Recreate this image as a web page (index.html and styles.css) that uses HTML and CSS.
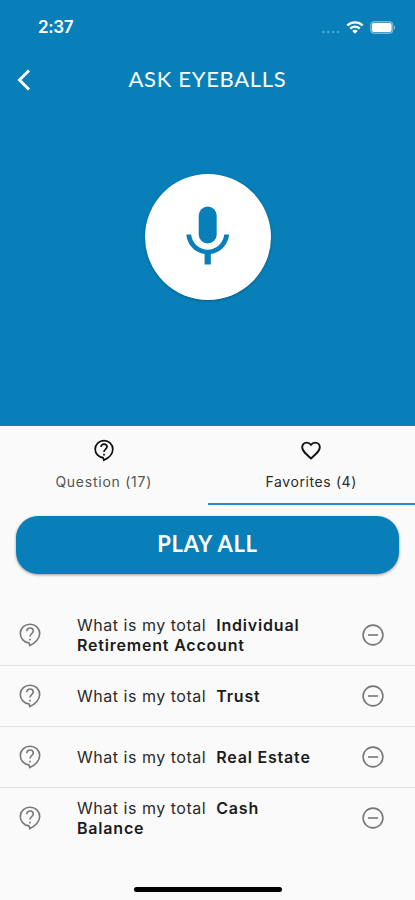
FILE: index.html
```html
<!DOCTYPE html>
<html lang="en">
<head>
    <meta charset="utf-8">
    <title>Ask Eyeballs</title>
    <link rel="stylesheet" href="styles.css">
</head>
<body>
    <svg class="symbols" width="0" height="0">
        <symbol id="question" viewBox="0 0 22 24">
            <path d="M11 1.200C5.600 1.200 1.300 5.300 1.300 10.500c0 4.900 3.800 8.900 8.700 9.400l.8 2.700c5.500-2.300 9.900-7 9.900-12.100 0-5.200-4.300-9.300-9.700-9.300z"/>
            <path d="M7.800 8.200c0-1.900 1.400-3.200 3.200-3.200s3.300 1.300 3.300 3c0 2.400-3.300 2.700-3.300 5.600M11 15.700v1.700"/>
        </symbol>
        <symbol id="minus" viewBox="0 0 22 22">
            <circle cx="11" cy="11" r="9.9"/>
            <path d="M6 11h10"/>
        </symbol>
    </svg>

    <header class="hero">
        <div class="status">
            <span class="time">2:37</span>
            <svg class="signal" width="18" height="4" viewBox="0 0 18 4">
                <circle cx="1.5" cy="2" r="1.3"/><circle cx="6.3" cy="2" r="1.3"/><circle cx="11.1" cy="2" r="1.3"/><circle cx="15.9" cy="2" r="1.3"/>
            </svg>
            <svg class="wifi" width="18" height="13" viewBox="0 0 18 13">
                <path d="M1.3 4.4c4.4-4.1 11-4.1 15.4 0M4.2 7.6c2.8-2.5 6.8-2.5 9.6 0"/>
                <path class="dot" d="M6.3 9.9c1.5-1.5 3.9-1.5 5.4 0L9 12.7z"/>
            </svg>
            <svg class="battery" width="26" height="13" viewBox="0 0 26 13">
                <rect class="shell" x=".5" y=".5" width="22.5" height="12" rx="3.5"/>
                <rect x="2" y="2" width="19.5" height="9" rx="2"/>
                <path class="cap" d="M24 4.5c1.7.6 1.7 3.4 0 4z"/>
            </svg>
        </div>
        <div class="navbar">
            <svg class="back" width="14" height="22" viewBox="0 0 14 22"><path d="M12 1.500 2.500 11l9.500 9.500"/></svg>
            <h1>ASK EYEBALLS</h1>
        </div>
        <div class="mic">
            <svg width="44" height="60" viewBox="0 0 44 60">
                <rect x="12.700" y=".5" width="18" height="37" rx="9"/>
                <path d="M.3 28.500h4.800c1.200 9 8.200 15.200 16.600 15.200s15.400-6.200 16.600-15.200h4.800c-.9 10-8.400 18.200-18.300 19.600v10.400h-6.200V48.100C8.700 46.700 1.200 38.500.3 28.500z"/>
            </svg>
        </div>
    </header>

    <nav class="tabs">
        <div class="tab">
            <svg class="icon question" width="20" height="23"><use href="#question"/></svg>
            <span class="wide">Question (17)</span>
        </div>
        <div class="tab active">
            <svg class="icon heart" width="20" height="23" viewBox="0 0 20 23"><path d="M10 19.500 8.600 18.200C4 14 1.200 11.500 1.200 8.200c0-2.600 2-4.600 4.500-4.600 1.700 0 3.300.8 4.300 2.200 1-1.400 2.600-2.200 4.300-2.200 2.500 0 4.500 2 4.500 4.600 0 3.300-2.800 5.800-7.400 10z"/></svg>
            <span>Favorites (4)</span>
        </div>
    </nav>

    <button class="play">PLAY ALL</button>

    <ul class="list">
        <li>
            <svg class="icon" width="22" height="24"><use href="#question"/></svg>
            <p>What is my total&nbsp; <b>Individual<br>Retirement Account</b></p>
            <svg class="icon" width="22" height="22"><use href="#minus"/></svg>
        </li>
        <li>
            <svg class="icon" width="22" height="24"><use href="#question"/></svg>
            <p>What is my total&nbsp; <b>Trust</b></p>
            <svg class="icon" width="22" height="22"><use href="#minus"/></svg>
        </li>
        <li>
            <svg class="icon" width="22" height="24"><use href="#question"/></svg>
            <p>What is my total&nbsp; <b>Real Estate</b></p>
            <svg class="icon" width="22" height="22"><use href="#minus"/></svg>
        </li>
        <li>
            <svg class="icon" width="22" height="24"><use href="#question"/></svg>
            <p>What is my total&nbsp; <b>Cash<br>Balance</b></p>
            <svg class="icon" width="22" height="22"><use href="#minus"/></svg>
        </li>
    </ul>

    <div class="home-bar"></div>
</body>
</html>
```
FILE: styles.css
```css
* {
    box-sizing: border-box;
}

body {
    margin: 0;
    height: 900px;
    display: flex;
    flex-direction: column;
    background-color: #fafafa;
    font-family: Inter, "Liberation Sans", sans-serif;
    color: #2b2b2b;
    overflow: hidden;
}

svg {
    display: block;
    flex: none;
}

.symbols {
    position: absolute;
}

.hero {
    height: 426px;
    background-color: #087fb8;
    color: #ffffff;
}

.status {
    display: flex;
    align-items: center;
    height: 54px;
    padding: 0 19px 0 38px;
}

.time {
    flex: 1;
    font-size: 17px;
    font-weight: 600;
    letter-spacing: -0.4px;
}

.signal {
    margin: 9px 6px 0 0;
    fill: #ffffff;
    opacity: 0.3;
}

.wifi {
    margin-right: 6px;
    fill: none;
    stroke: #ffffff;
    stroke-width: 2.4;
}

.wifi .dot {
    fill: #ffffff;
    stroke: none;
}

.battery {
    fill: #ffffff;
}

.battery .shell {
    fill: #ffffff;
    fill-opacity: 0.25;
    stroke: #ffffff;
    stroke-opacity: 0.35;
}

.battery .cap {
    opacity: 0.5;
}

.navbar {
    display: grid;
    grid-template-columns: 14px 1fr 14px;
    align-items: center;
    height: 52px;
    padding: 0 17px;
}

.back {
    fill: none;
    stroke: #ffffff;
    stroke-width: 3;
}

h1 {
    margin: 0;
    padding-bottom: 3px;
    text-align: center;
    font-family: Lato, sans-serif;
    font-size: 22px;
    font-weight: 400;
    letter-spacing: 0.7px;
}

.mic {
    display: flex;
    align-items: center;
    justify-content: center;
    width: 126px;
    height: 126px;
    margin: 68px auto 0;
    padding-bottom: 3px;
    border-radius: 50%;
    background-color: #ffffff;
    box-shadow: 0 1px 3px rgba(0, 0, 0, 0.25);
    fill: #087fb8;
}

.tabs {
    display: flex;
    height: 79px;
}

.tab {
    flex: 1;
    display: flex;
    flex-direction: column;
    align-items: center;
    padding-top: 13px;
    font-size: 14px;
    line-height: 18px;
    letter-spacing: 0.6px;
    color: #555555;
}

.tab span {
    margin-top: 11px;
}

.tab .wide {
    letter-spacing: 0.75px;
}

.tab.active {
    color: #2b2b2b;
    border-bottom: 2px solid #2d88ce;
}

.icon {
    fill: none;
    stroke: #777777;
    stroke-width: 1.6;
}

.tab .icon {
    stroke: #111111;
    stroke-width: 1.9;
}

.play {
    height: 58px;
    margin: 11px 16px 0;
    padding: 0 0 3px;
    border: none;
    border-radius: 22px;
    background-color: #087fb8;
    box-shadow: 0 1px 3px rgba(0, 0, 0, 0.4);
    color: #ffffff;
    font-family: Lato, sans-serif;
    font-size: 22px;
    font-weight: 700;
    letter-spacing: 0.7px;
}

.list {
    margin: 31px 0 0;
    padding: 0;
    list-style: none;
}

.list li {
    display: grid;
    grid-template-columns: 22px 1fr 22px;
    align-items: center;
    height: 61px;
    padding: 0 31px 0 19px;
    border-bottom: 1px solid #e2e2e2;
}

.list li:last-child {
    height: 60px;
    border-bottom: none;
}

.list p {
    margin: 0 30px 0 36px;
    font-size: 16px;
    line-height: 20.5px;
    letter-spacing: 0.52px;
}

.list b {
    font-weight: 600;
    letter-spacing: 0.8px;
    color: #1c1c1c;
}

.home-bar {
    width: 148px;
    height: 5px;
    margin: auto auto 8px;
    border-radius: 3px;
    background-color: #000000;
}
```
